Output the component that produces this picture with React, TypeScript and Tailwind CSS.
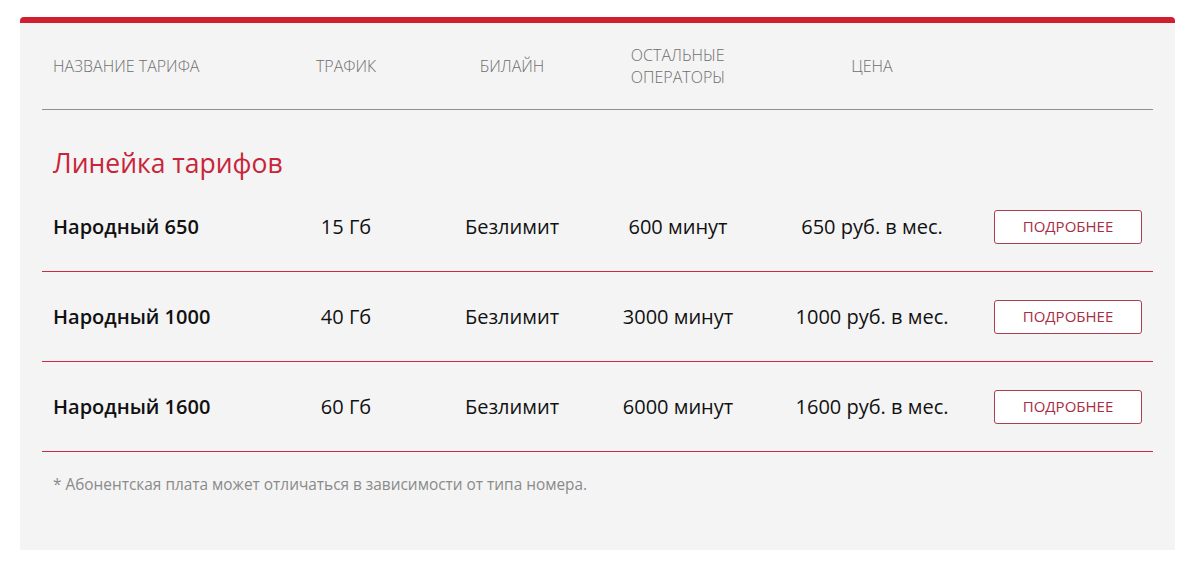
import React from 'react';

interface Tariff {
  name: string;
  traffic: string;
  beeline: string;
  others: string;
  price: string;
}

const tariffs: Tariff[] = [
  { name: 'Народный 650', traffic: '15 Гб', beeline: 'Безлимит', others: '600 минут', price: '650 руб. в мес.' },
  { name: 'Народный 1000', traffic: '40 Гб', beeline: 'Безлимит', others: '3000 минут', price: '1000 руб. в мес.' },
  { name: 'Народный 1600', traffic: '60 Гб', beeline: 'Безлимит', others: '6000 минут', price: '1600 руб. в мес.' },
];

const cols = 'grid grid-cols-[221px_166px_166px_166px_222px_170px]';

export default function App() {
  return (
    <div className="min-h-[564px] bg-white pt-[17px] px-[20px] pr-[24px] font-['Open_Sans',sans-serif]">
      <div className="rounded-t-[4px] border-t-[6px] border-t-[#d0202f] bg-[#f4f4f4] px-[22px] pb-[55px]">
        {/* шапка таблицы */}
        <div className={`${cols} h-[86px] items-center text-[16px] font-light uppercase leading-[22px] text-[#6f6f6f]`}>
          <div className="pl-[11px]">Название тарифа</div>
          <div className="text-center">Трафик</div>
          <div className="text-center">Билайн</div>
          <div className="flex justify-center">
            <div className="text-left">
              Остальные
              <br />
              операторы
            </div>
          </div>
          <div className="text-center">Цена</div>
          <div />
        </div>
        <div className="h-px bg-[#8f8f8f]" />

        <h2 className="pl-[11px] pt-[35px] pb-[1px] text-[26.5px] leading-[36px] text-[#c8243a]">Линейка тарифов</h2>

        {tariffs.map((t) => (
          <div key={t.name}>
            <div className={`${cols} h-[89px] items-center text-[20px] text-[#111]`}>
              <div className="pl-[11px] font-semibold">{t.name}</div>
              <div className="text-center">{t.traffic}</div>
              <div className="text-center">{t.beeline}</div>
              <div className="text-center">{t.others}</div>
              <div className="text-center">{t.price}</div>
              <div className="flex justify-center">
                <button className="h-[34px] w-[148px] rounded-[3px] border border-[#a8404f] bg-white text-[15px] uppercase text-[#a82d43]">
                  Подробнее
                </button>
              </div>
            </div>
            <div className="h-px bg-[#cc2a40]" />
          </div>
        ))}

        <p className="mt-[23px] pl-[11px] text-[15.4px] leading-[20px] text-[#8a8a8a]">
          * Абонентская плата может отличаться в зависимости от типа номера.
        </p>
      </div>
    </div>
  );
}
